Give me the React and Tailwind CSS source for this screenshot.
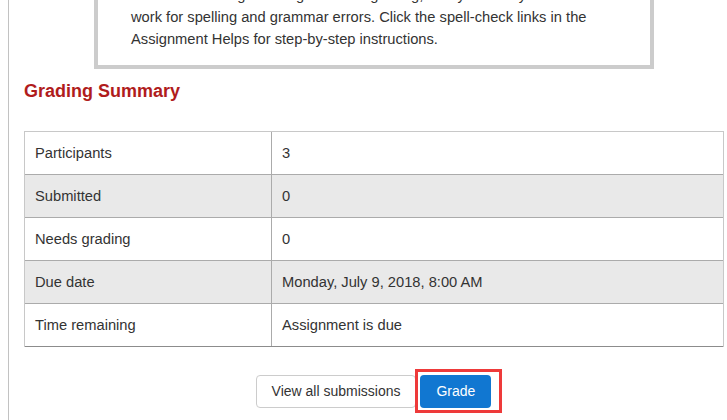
const rows = [
  { label: 'Participants', value: '3' },
  { label: 'Submitted', value: '0' },
  { label: 'Needs grading', value: '0' },
  { label: 'Due date', value: 'Monday, July 9, 2018, 8:00 AM' },
  { label: 'Time remaining', value: 'Assignment is due' },
];

const SummaryRow = ({ row, index, last }) => {
  const striped = index % 2 === 1;
  return (
    <div
      className={
        'flex h-[43px] border-b ' +
        (last ? 'border-[#8c8c8c] ' : 'border-[#ababab] ') +
        (striped ? 'bg-[#e9e9e9]' : 'bg-white')
      }
    >
      <div className="w-[247px] flex items-center pl-[10px] border-r border-[#ababab]">
        {row.label}
      </div>
      <div className="flex-1 flex items-center pl-[10px]">{row.value}</div>
    </div>
  );
};

export default function App() {
  return (
    <div
      className="h-[420px] overflow-hidden bg-white text-[#333] text-[14.7px]"
      style={{ fontFamily: '"Liberation Sans", Arial, sans-serif' }}
    >
      {/* page is scrolled: the top of the notice box sits above the viewport */}
      <div className="-mt-[35px] pl-2 h-[455px]">
        <div className="h-full border-l border-[#c2c2c2] pl-[15px] pr-[3px]">
          <div className="mx-auto w-[560px] border-4 border-[#cccccc] pt-[15px] pb-[15px] pl-[33px] pr-2 leading-[22px] whitespace-nowrap">
            Before submitting an assignment for grading, always check your written
            <br />
            work for spelling and grammar errors. Click the spell-check links in the
            <br />
            Assignment Helps for step-by-step instructions.
          </div>

          <h3 className="mt-[12px] text-[18px] leading-[21.6px] font-bold text-[#b01c1c]">
            Grading Summary
          </h3>

          <div className="mt-[28px] border-t border-l border-r border-[#c8c8c8]">
            {rows.map((row, i) => (
              <SummaryRow key={row.label} row={row} index={i} last={i === rows.length - 1} />
            ))}
          </div>

          <div className="mt-[28px] flex justify-center gap-1 pr-[1px]">
            <button className="h-[33px] px-[15px] rounded-[4px] border border-[#cccccc] bg-white text-[14px] text-[#333]">
              View all submissions
            </button>
            <div className="relative">
              <button className="h-[33px] px-[16px] rounded-[4px] bg-[#1177d1] text-[14px] text-white">
                Grade
              </button>
              <div className="absolute -left-[5px] -top-[6px] -right-[11px] -bottom-[5px] border-[3px] border-[#ee3a3a] pointer-events-none" />
            </div>
          </div>
        </div>
      </div>
    </div>
  );
}
